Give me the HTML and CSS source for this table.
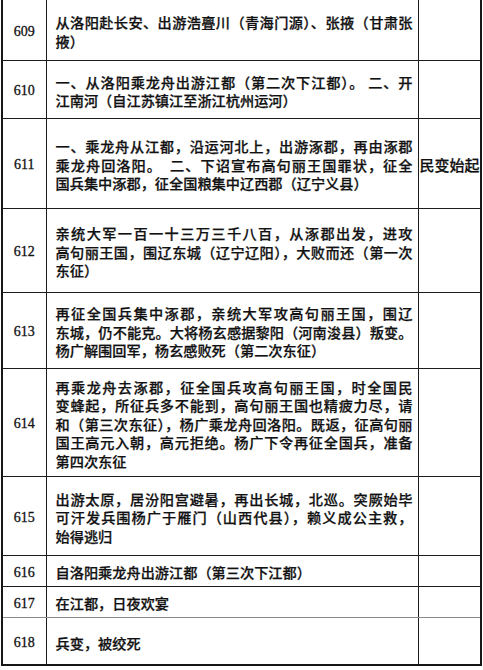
FILE: index.html
```html
<!DOCTYPE html>
<html lang="zh-CN">
<head>
<meta charset="utf-8">
<title>隋炀帝年表</title>
<link rel="stylesheet" href="styles.css">
</head>
<body>
<table class="chron">
  <colgroup>
    <col class="c-year">
    <col class="c-event">
    <col class="c-note">
  </colgroup>
  <tbody>
    <tr class="h60 first">
      <td class="yr">609</td>
      <td class="ev">
        <span class="ln">从洛阳赴长安、出游浩亹川（青海门源）、张掖（甘肃张</span>
        <span class="ln end">掖）</span>
      </td>
      <td class="nt"></td>
    </tr>
    <tr class="h58">
      <td class="yr">610</td>
      <td class="ev">
        <span class="ln">一、从洛阳乘龙舟出游江都（第二次下江都）。 二、开</span>
        <span class="ln end">江南河（自江苏镇江至浙江杭州运河）</span>
      </td>
      <td class="nt"></td>
    </tr>
    <tr class="h90">
      <td class="yr">611</td>
      <td class="ev">
        <span class="ln">一、乘龙舟从江都，沿运河北上，出游涿郡，再由涿郡</span>
        <span class="ln">乘龙舟回洛阳。　二、下诏宣布高句丽王国罪状，征全</span>
        <span class="ln end">国兵集中涿郡，征全国粮集中辽西郡（辽宁义县）</span>
      </td>
      <td class="nt">民变始起</td>
    </tr>
    <tr class="h84">
      <td class="yr">612</td>
      <td class="ev">
        <span class="ln">亲统大军一百一十三万三千八百，从涿郡出发，进攻</span>
        <span class="ln">高句丽王国，围辽东城（辽宁辽阳），大败而还（第一次</span>
        <span class="ln end">东征）</span>
      </td>
      <td class="nt"></td>
    </tr>
    <tr class="h76">
      <td class="yr">613</td>
      <td class="ev">
        <span class="ln">再征全国兵集中涿郡，亲统大军攻高句丽王国，围辽</span>
        <span class="ln">东城，仍不能克。大将杨玄感据黎阳（河南浚县）叛变。</span>
        <span class="ln end">杨广解围回军，杨玄感败死（第二次东征）</span>
      </td>
      <td class="nt"></td>
    </tr>
    <tr class="h108">
      <td class="yr">614</td>
      <td class="ev">
        <span class="ln">再乘龙舟去涿郡，征全国兵攻高句丽王国，时全国民</span>
        <span class="ln">变蜂起，所征兵多不能到，高句丽王国也精疲力尽，请</span>
        <span class="ln">和（第三次东征），杨广乘龙舟回洛阳。既返，征高句丽</span>
        <span class="ln">国王高元入朝，高元拒绝。杨广下令再征全国兵，准备</span>
        <span class="ln end">第四次东征</span>
      </td>
      <td class="nt"></td>
    </tr>
    <tr class="h79">
      <td class="yr">615</td>
      <td class="ev">
        <span class="ln">出游太原，居汾阳宫避暑，再出长城，北巡。突厥始毕</span>
        <span class="ln">可汗发兵围杨广于雁门（山西代县），赖义成公主救，</span>
        <span class="ln end">始得逃归</span>
      </td>
      <td class="nt"></td>
    </tr>
    <tr class="h31">
      <td class="yr">616</td>
      <td class="ev"><span class="ln end">自洛阳乘龙舟出游江都（第三次下江都）</span></td>
      <td class="nt"></td>
    </tr>
    <tr class="h31 grayline">
      <td class="yr">617</td>
      <td class="ev"><span class="ln end">在江都，日夜欢宴</span></td>
      <td class="nt"></td>
    </tr>
    <tr class="h48">
      <td class="yr">618</td>
      <td class="ev"><span class="ln end">兵变，被绞死</span></td>
      <td class="nt"></td>
    </tr>
  </tbody>
</table>
</body>
</html>
```
FILE: styles.css
```css
html, body {
  margin: 0;
  padding: 0;
  background: #ffffff;
}

body {
  width: 483px;
  height: 670px;
  overflow: hidden;
  color: #111111;
}

.chron {
  margin-left: 1px;
  width: 479px;
  border-collapse: collapse;
  table-layout: fixed;
  border-left: 2px solid #161616;
  border-right: 2px solid #161616;
  border-bottom: 2px solid #161616;
}

.c-year { width: 44px; }
.c-event { width: 372px; }
.c-note { width: 63px; }

.chron td {
  border: 1px solid #1c1c1c;
  padding: 4px 0 0 0;
  vertical-align: middle;
}

.chron tr.first td {
  border-top: none;
}

.chron tr.grayline td {
  border-bottom: 1px solid #8a8a8a;
}

.h60 { height: 60px; }
.h58 { height: 58px; }
.h90 { height: 90px; }
.h84 { height: 84px; }
.h76 { height: 76px; }
.h108 { height: 108px; }
.h79 { height: 79px; }
.h31 { height: 31px; }
.h48 { height: 48px; }

.yr {
  text-align: center;
  font-family: "Liberation Serif", "DejaVu Serif", serif;
  font-size: 14px;
  line-height: 16px;
  -webkit-text-stroke: 0.3px #111111;
}

.ev {
  padding-left: 9px !important;
  padding-right: 5px !important;
  font-family: "Noto Sans CJK SC", "Noto Sans", sans-serif;
  font-size: 14.2px;
  line-height: 18.5px;
  font-weight: 500;
  -webkit-text-stroke: 0.25px #111111;
}

.ln {
  display: block;
  white-space: nowrap;
  text-align: justify;
  text-align-last: justify;
}

.ln.end {
  text-align: left;
  text-align-last: left;
}

.nt {
  font-family: "Noto Sans CJK SC", sans-serif;
  font-size: 15px;
  font-weight: 500;
  line-height: 18px;
  white-space: nowrap;
  padding-left: 1px !important;
  -webkit-text-stroke: 0.25px #111111;
}
```
